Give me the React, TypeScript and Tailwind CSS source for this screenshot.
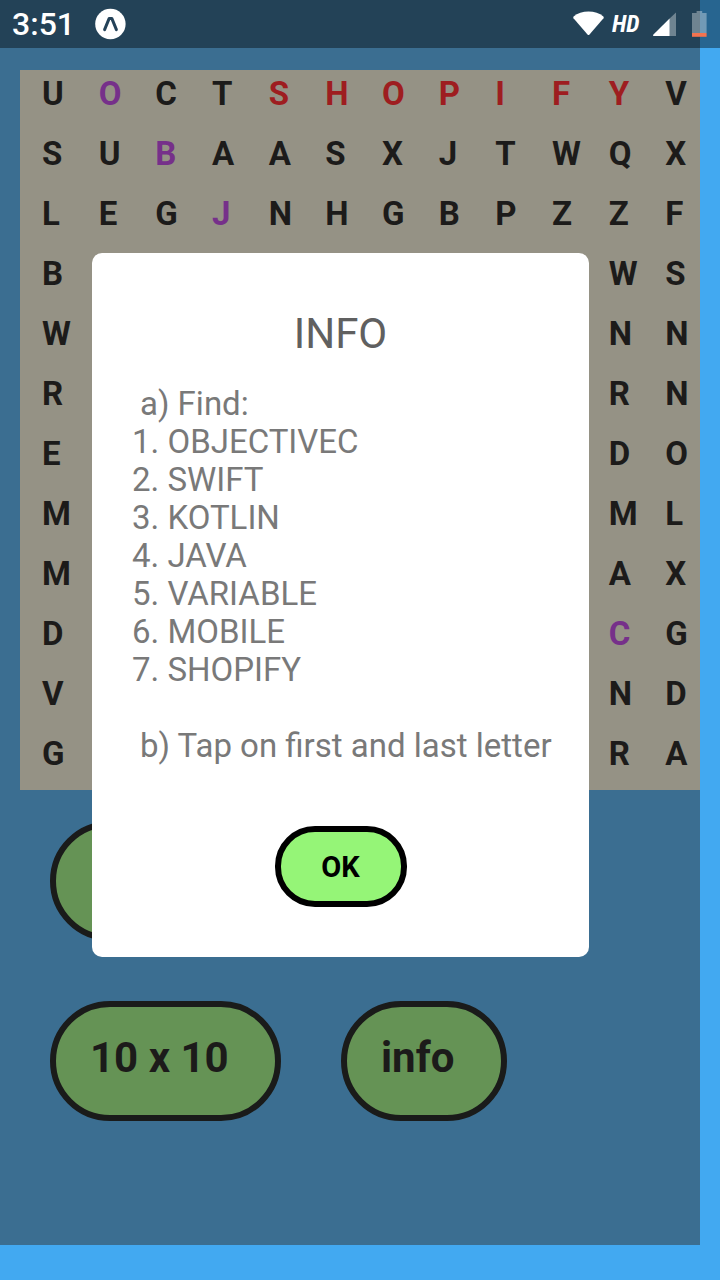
const PURPLE = "text-[#76308a]";
const RED = "text-[#9e1d20]";
const DARK = "text-[#1c1b1a]";

const rows = [
  "UOCTSHOPIFYV",
  "SUBAASXJTWQX",
  "LEGJNHGBPZZF",
  "B         WS",
  "W         NN",
  "R         RN",
  "E         DO",
  "M         ML",
  "M         AX",
  "D         CG",
  "V         ND",
  "G         RA",
];

const found: Record<string, string> = {
  "0-1": PURPLE,
  "1-2": PURPLE,
  "2-3": PURPLE,
  "9-10": PURPLE,
  "0-4": RED,
  "0-5": RED,
  "0-6": RED,
  "0-7": RED,
  "0-8": RED,
  "0-9": RED,
  "0-10": RED,
};

const words = ["OBJECTIVEC", "SWIFT", "KOTLIN", "JAVA", "VARIABLE", "MOBILE", "SHOPIFY"];

function StatusBar() {
  return (
    <header className="absolute inset-x-0 top-0 z-20 flex h-12 items-center bg-black/40 pl-3 text-white">
      <span className="text-[32px] leading-12 font-medium">3:51</span>
      <svg className="ml-5 size-8" viewBox="0 0 32 32" aria-hidden="true">
        <circle cx="15.4" cy="16" r="15.2" fill="#fff" />
        <path d="M9.6 21.6 L14.2 10.4 H16.8 L21.4 21.6" fill="none" stroke="#244259" strokeWidth="3" strokeLinecap="round" strokeLinejoin="round" />
      </svg>
      <div className="ml-auto flex items-center">
        <svg className="h-8 w-8" viewBox="0 0 32 32" aria-hidden="true">
          <path d="M1.6 8.6 C9 1.8 24 1.8 31.4 8.6 C31.9 9.1 31.9 9.7 31.5 10.2 L17.5 26.4 Q16.5 27.4 15.5 26.4 L1.5 10.2 C1.1 9.7 1.1 9.1 1.6 8.6 Z" fill="#fff" />
        </svg>
        <span className="ml-2 w-8 text-2xl font-bold italic [font-family:'Roboto_Condensed',Roboto,sans-serif]">HD</span>
        <svg className="ml-2 h-6 w-6" viewBox="0 0 24 24" aria-hidden="true">
          <path d="M17.6 6.6 L24 0.4 V24 H17.6 Z" fill="#fff" opacity=".35" />
          <path d="M17.6 6.6 V24 H1.4 Q0.7 23.4 1.2 22.8 Z" fill="#fff" />
        </svg>
        <svg className="mr-3 ml-4 h-7 w-4" viewBox="0 0 16 28" aria-hidden="true">
          <path d="M4.6 1 H10.2 V3 H14.6 V23 H0 V3 H4.6 Z" fill="#fff" opacity=".35" />
          <path d="M0 23 H14.6 V26.8 H0 Z" fill="#f4734f" />
        </svg>
      </div>
    </header>
  );
}

function LetterGrid() {
  return (
    <div className="ml-5 grid grid-cols-12 bg-[#959285]">
      {rows.flatMap((row, r) =>
        row.split("").map((letter, c) => (
          <button
            key={`${r}-${c}`}
            type="button"
            className={`flex h-15 items-start pt-1 pl-[22px] text-[33px] leading-10 font-bold ${found[`${r}-${c}`] ?? DARK}`}
          >
            {letter}
          </button>
        )),
      )}
    </div>
  );
}

const gameButton =
  "h-30 rounded-[60px] border-6 border-[#1a1b1a] bg-[#659355] pb-2 pl-[34px] text-left text-[42px] font-bold text-[#1c1b1a]";

function InfoDialog() {
  return (
    <div className="absolute inset-0 z-10 flex items-center pr-[111px] pb-[35px] pl-[92px]">
      <section role="dialog" aria-labelledby="info-title" className="flex w-full flex-col items-center rounded-[10px] bg-white px-10 pt-[57px] pb-[50px]">
        <h1 id="info-title" className="text-[42px] leading-12 text-[#606060]">INFO</h1>
        <div className="mt-[27px] w-full text-[33px] leading-[38px] whitespace-nowrap text-[#797979]">
          <p className="pl-2">a) Find:</p>
          <ol>
            {words.map((word, i) => (
              <li key={word}>
                {i + 1}. {word}
              </li>
            ))}
          </ol>
          <p className="mt-[38px] pl-2">b) Tap on first and last letter</p>
        </div>
        <button type="button" className="mt-[61px] h-[81px] w-33 rounded-[40px] border-6 border-black bg-[#95f577] pt-0.5 text-[29px] font-bold text-black">
          OK
        </button>
      </section>
    </div>
  );
}

export default function App() {
  return (
    <div className="relative flex min-h-screen flex-col bg-[#42a9f1] pr-5 pb-[35px] [font-family:Roboto,sans-serif]">
      <StatusBar />
      <main className="relative flex-1 bg-[#3b6e91] pt-[70px]">
        <LetterGrid />
        <div className="mt-[31px] flex flex-col items-start gap-15 pl-[50px]">
          <button type="button" aria-label="New game" className={`${gameButton} w-[230px]`} />
          <div className="flex gap-15">
            <button type="button" className={`${gameButton} w-[231px]`}>10 x 10</button>
            <button type="button" className={`${gameButton} w-[166px]`}>info</button>
          </div>
        </div>
        <InfoDialog />
      </main>
    </div>
  );
}
